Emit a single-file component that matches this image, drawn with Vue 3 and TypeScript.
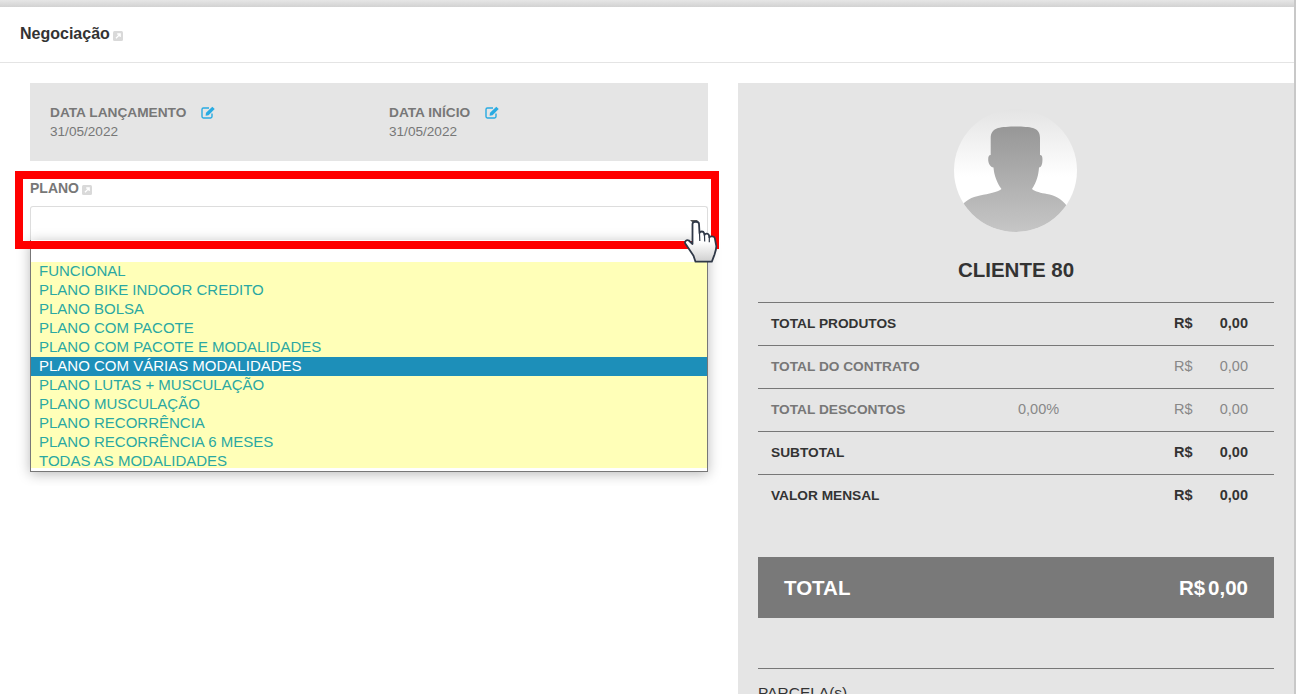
<script setup lang="ts">
const planos = [
  'FUNCIONAL',
  'PLANO BIKE INDOOR CREDITO',
  'PLANO BOLSA',
  'PLANO COM PACOTE',
  'PLANO COM PACOTE E MODALIDADES',
  'PLANO COM VÁRIAS MODALIDADES',
  'PLANO LUTAS + MUSCULAÇÃO',
  'PLANO MUSCULAÇÃO',
  'PLANO RECORRÊNCIA',
  'PLANO RECORRÊNCIA 6 MESES',
  'TODAS AS MODALIDADES',
]
const selected = 'PLANO COM VÁRIAS MODALIDADES'

const totais = [
  { label: 'TOTAL PRODUTOS', pct: '', muted: false },
  { label: 'TOTAL DO CONTRATO', pct: '', muted: true },
  { label: 'TOTAL DESCONTOS', pct: '0,00%', muted: true },
  { label: 'SUBTOTAL', pct: '', muted: false },
  { label: 'VALOR MENSAL', pct: '', muted: false },
]
const datas = [
  { label: 'DATA LANÇAMENTO', value: '31/05/2022' },
  { label: 'DATA INÍCIO', value: '31/05/2022' },
]
</script>

<template>
  <div class="page">
    <div class="top-shadow"></div>
    <header class="head">
      <span class="title">Negociação</span>
      <svg class="ext" width="10" height="10" viewBox="0 0 10 10"><rect width="10" height="10" rx="1.5" fill="#d9d9d9" /><path d="M3 7.2 6.6 3.6M4.2 3h3v3" stroke="#fff" stroke-width="1.3" fill="none" /></svg>
    </header>
    <main class="body">
      <section class="left">
        <div class="dates">
          <div v-for="d in datas" :key="d.label" class="date">
            <div class="date-label">
              {{ d.label }}
              <svg class="edit" width="15" height="13" viewBox="0 0 15 13"><path d="M11 7.5V10.6a1.4 1.4 0 0 1-1.4 1.4H2.400A1.4 1.4 0 0 1 1 10.600V3.4A1.4 1.4 0 0 1 2.400 2H8" fill="none" stroke="#29abe2" stroke-width="1.4" /><path d="M5 6.800 11.300.7l2.400 2.300L7.500 9.200 4.600 9.800z" fill="#29abe2" /></svg>
            </div>
            <div class="date-value">{{ d.value }}</div>
          </div>
        </div>
        <div class="plano-label">
          PLANO
          <svg class="ext" width="10" height="10" viewBox="0 0 10 10"><rect width="10" height="10" rx="1.5" fill="#d9d9d9" /><path d="M3 7.2 6.6 3.6M4.2 3h3v3" stroke="#fff" stroke-width="1.3" fill="none" /></svg>
        </div>
        <div class="select">
          <span class="caret"></span>
        </div>
        <ul class="options">
          <li v-for="p in planos" :key="p" :class="{ on: p === selected }">{{ p }}</li>
        </ul>
        <div class="highlight"></div>
        <svg class="hand" width="36" height="47" viewBox="0 0 36 47">
          <defs>
            <linearGradient id="handFill" x1="0" y1="0" x2="0" y2="1">
              <stop offset="0.5" stop-color="#ffffff" />
              <stop offset="1" stop-color="#cfcfcf" />
            </linearGradient>
          </defs>
          <path d="M8.500 5c0-3 6.500-3 6.500 0l.5 9c.8-2 4-2 4.500 0l.5 2c.8-2 4-1.800 4.500.3l.3 2c.8-1.500 5-1.200 5.500.8l1.500 8c.2 3-1 6-2 9l-2.500 6.600H11.500l-2-6L1.300 24.500c-1.100-2 1.200-4.200 3.500-3l3.700 3.500z" fill="url(#handFill)" stroke="#2f3847" stroke-width="1.800" stroke-linejoin="round" />
          <path d="M15.500 14l.3 8M20.500 16l.2 6.500M25.300 18.300v5" stroke="#2f3847" stroke-width="1.200" fill="none" />
        </svg>
      </section>
      <aside class="resumo">
        <svg class="avatar" width="123" height="123" viewBox="0 0 123 123">
          <defs>
            <linearGradient id="bgGrad" x1="0" y1="0" x2="0" y2="1">
              <stop offset="0" stop-color="#e4e4e4" />
              <stop offset="0.55" stop-color="#ffffff" />
              <stop offset="0.75" stop-color="#ffffff" />
            </linearGradient>
            <linearGradient id="bodyGrad" x1="0" y1="0" x2="0" y2="1">
              <stop offset="0" stop-color="#979797" />
              <stop offset="1" stop-color="#c8c8c8" />
            </linearGradient>
            <clipPath id="circ"><circle cx="61.500" cy="61.500" r="61.500" /></clipPath>
            <filter id="soft" x="-5%" y="-5%" width="110%" height="110%"><feGaussianBlur stdDeviation="0.7" /></filter>
          </defs>
          <circle cx="61.500" cy="61.500" r="61.500" fill="url(#bgGrad)" />
          <g clip-path="url(#circ)">
            <path filter="url(#soft)" d="M44 19C52 17 72 17 79 19c5 1.500 7 5 7 10V46c2.500 0 2.600 3 2.400 6-.2 3.500-1 6.500-3.400 6.500-.5 7-2 14-7 21.500 3 2.500 9 4 15 5 7 1.200 14 4 20 12V128H5V100c6-9 13-12 21-13.500 9-2 17-3 21.500-6.500C43 74 40 66 39.500 58.500c-2.500 0-4.800-3-5.200-6.500-.3-3 0-6 2.400-6V29c0-5 2.300-8.500 7.300-10z" fill="url(#bodyGrad)" />
          </g>
        </svg>
        <h2 class="cliente">CLIENTE 80</h2>
        <div class="rows">
          <div v-for="t in totais" :key="t.label" class="row" :class="{ muted: t.muted }">
            <span class="r-label">{{ t.label }}</span>
            <span class="r-pct">{{ t.pct }}</span>
            <span class="r-cur">R$</span>
            <span class="r-val">0,00</span>
          </div>
        </div>
        <div class="total">
          <span>TOTAL</span>
          <span class="total-val">R$<i>0,00</i></span>
        </div>
        <div class="parcelas">PARCELA(s)</div>
      </aside>
    </main>
  </div>
</template>

<style>
html, body {
  margin: 0;
  height: 100%;
  overflow: hidden;
  background: #fff;
}
</style>

<style scoped>
.page {
  height: 694px;
  overflow: hidden;
  box-sizing: border-box;
  border-right: 2px solid #c8c8c8;
  font-family: "Liberation Sans", Arial, sans-serif;
  color: #333;
  display: flex;
  flex-direction: column;
}
.top-shadow {
  height: 7px;
  flex: none;
  background: linear-gradient(#e6e6e6, #d2d2d2);
}
.head {
  height: 56px;
  flex: none;
  box-sizing: border-box;
  border-bottom: 1px solid #e4e4e4;
  padding: 0 0 1px 20px;
  display: flex;
  align-items: center;
  gap: 3px;
}
.title {
  font-size: 16px;
  font-weight: bold;
}
.ext {
  flex: none;
  margin-top: 3px;
}
.body {
  display: flex;
  gap: 30px;
  padding: 20px 0 0 30px;
}
.left {
  width: 678px;
  flex: none;
  position: relative;
}
.dates {
  height: 78px;
  box-sizing: border-box;
  background: #e5e5e5;
  padding: 21px 0 0 20px;
  display: flex;
}
.date {
  width: 339px;
  flex: none;
}
.date-label {
  font-size: 13.7px;
  font-weight: bold;
  color: #777;
  line-height: 17px;
  display: flex;
  align-items: center;
  gap: 15px;
}
.edit {
  flex: none;
}
.date-value {
  font-size: 13.6px;
  color: #777;
  line-height: 22px;
}
.plano-label {
  margin-top: 19px;
  height: 17px;
  font-size: 14px;
  font-weight: bold;
  color: #777;
  line-height: 17px;
  display: flex;
  align-items: center;
  gap: 3px;
}
.select {
  margin-top: 9px;
  height: 34px;
  box-sizing: border-box;
  border: 1px solid #ddd;
  border-bottom: none;
  border-radius: 3px 3px 0 0;
  position: relative;
}
.caret {
  position: absolute;
  right: 9px;
  top: 13px;
  width: 0;
  height: 0;
  border: 4px solid transparent;
  border-top: 4px solid #555;
}
.options {
  list-style: none;
  margin: 0;
  padding: 22px 0 3px 0;
  background: #fff;
  border: 1px solid #777;
  border-top: none;
  box-shadow: 0 2px 12px rgba(0, 0, 0, 0.28);
  clip-path: inset(-14px -14px -14px -14px);
  font-size: 15px;
  line-height: 17px;
  color: #2aa8a2;
}
.options li {
  background: #ffffb8;
  padding-left: 8px;
  height: 19px;
  white-space: nowrap;
}
.options li:last-child {
  height: 16px;
}
.options li.on {
  background: #1d8fb9;
  color: #fff;
}
.highlight {
  position: absolute;
  left: -15px;
  top: 88px;
  width: 704px;
  height: 78px;
  box-sizing: border-box;
  border: 8px solid #f00;
  pointer-events: none;
}
.hand {
  position: absolute;
  left: 654px;
  top: 136px;
}
.resumo {
  width: 556px;
  flex: none;
  height: 620px;
  box-sizing: border-box;
  background: #e5e5e5;
  padding: 26px 20px 0;
  display: flex;
  flex-direction: column;
  align-items: center;
}
.avatar {
  flex: none;
  margin-left: -1px;
}
.cliente {
  margin: 26px 0 0;
  height: 44px;
  font-size: 20.5px;
  font-weight: bold;
  line-height: 24px;
  color: #333;
}
.rows {
  width: 100%;
}
.row {
  height: 43px;
  box-sizing: border-box;
  border-top: 1px solid #777;
  padding: 0 26px 3px 13px;
  display: grid;
  grid-template-columns: 247px 156px 45px 1fr;
  align-items: center;
  font-size: 14.5px;
  color: #333;
}
.row .r-label {
  font-size: 13.7px;
  font-weight: bold;
  padding-top: 2px;
}
.r-cur, .r-val {
  font-weight: bold;
}
.r-val {
  text-align: right;
}
.row.muted {
  color: #888;
}
.row.muted .r-label {
  color: #777;
}
.row.muted .r-cur, .row.muted .r-val {
  font-weight: normal;
}
.total {
  width: 100%;
  height: 61px;
  margin-top: 40px;
  flex: none;
  box-sizing: border-box;
  background: #797979;
  color: #fff;
  padding: 0 26px;
  display: flex;
  justify-content: space-between;
  align-items: center;
  font-size: 20.5px;
  font-weight: bold;
}
.total-val i {
  font-style: normal;
  margin-left: 3px;
}
.parcelas {
  width: 100%;
  margin-top: 50px;
  border-top: 1px solid #777;
  padding-top: 15px;
  font-size: 15.5px;
  color: #333;
}
</style>
